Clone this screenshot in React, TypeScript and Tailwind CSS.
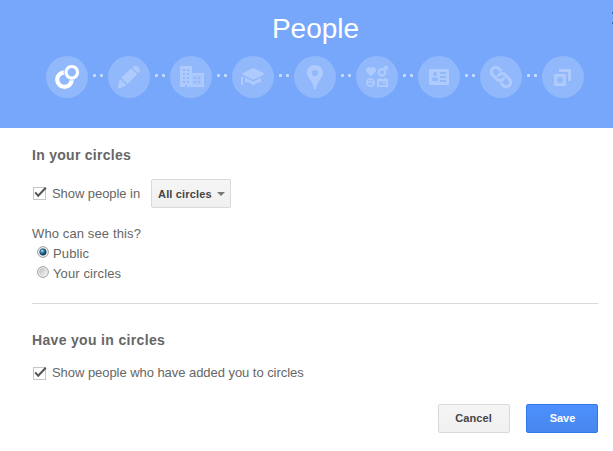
import React, { Fragment, ReactNode } from "react";

const icons: ReactNode[] = [
  <g fill="none" stroke="#fff">
    <circle cx="18.5" cy="23.6" r="7.3" strokeWidth="4.2" />
    <circle cx="25.8" cy="16.3" r="8.2" fill="#92b8fc" stroke="none" />
    <circle cx="25.8" cy="16.3" r="5.8" strokeWidth="3.2" />
  </g>,
  <g fill="#afcbfd">
    <path d="M12.8 22.3 23.3 12.2 29.2 18.2 19 28.5 18.6 26 15.5 25.3 15 22.5Z" />
    <path d="M24.3 11.3 25.5 10.2Q28 9 30 11.2 32.6 13.5 31.2 16.2L30.1 17.3Z" />
    <path d="M11.6 23.8 13.8 24 14.5 26.5 17.2 27.2 18 29.4 13.5 31.8 9.8 32.3 10.5 27.8Z" />
  </g>,
  <g fill="#afcbfd">
    <path
      fillRule="evenodd"
      d="M10 10H22V31H17V29H15V31H10ZM13 13V15H15V13ZM17 13V15H19V13ZM13 17V19H15V17ZM17 17V19H19V17ZM13 21V23H15V21ZM17 21V23H19V21ZM13 25V27H15V25ZM17 25V27H19V25Z"
    />
    <path fillRule="evenodd" d="M22 17H34V31H22ZM22 19V29H32V19Z" />
    <path fillRule="evenodd" fillOpacity=".75" d="M22 19H32V29H22ZM24 21V23H26V21ZM28 21V23H30V21ZM24 25V27H26V25ZM28 25V27H30V25Z" />
  </g>,
  <g fill="#afcbfd">
    <path d="M9.5 18 20 12.4Q21.3 11.7 22.6 12.4L33 17.7 22.7 23.2Q21.5 23.9 20.2 23.2Z" />
    <path d="M13 21.6 19.5 25Q21.3 25.8 23 25L29 21.8V26L26 26.2 21.5 29.2 17 26.2 13 26Z" />
    <path d="M9 20.5 11 21.3V29H9Z" />
  </g>,
  <path
    fill="#afcbfd"
    fillRule="evenodd"
    d="M21 9C16.3 9 13 12.6 13 16.8 13 22.5 20 26 20 33H22C22 26 29 22.5 29 16.8 29 12.6 25.7 9 21 9ZM21 14A3 3 0 1 1 21 20 3 3 0 1 1 21 14Z"
  />,
  <g fill="#afcbfd">
    <path d="M15 20.5 10.9 16.3C8.3 13.3 12.4 8.8 15 12.2 17.6 8.8 21.7 13.3 19.1 16.3Z" />
    <circle cx="26" cy="16.3" r="3.2" fill="none" stroke="#afcbfd" strokeWidth="2.3" />
    <path d="M28 10H32V14H30.5V12.7L28.8 14.4 27.7 13.3 29.2 11.7H28Z" />
    <path
      fillRule="evenodd"
      d="M14.5 22A4.5 4.5 0 1 1 14.5 31 4.5 4.5 0 1 1 14.5 22ZM12.3 24V25.7H13.8V24ZM15.3 24V25.7H16.8V24ZM11.8 27Q14.5 31.5 17.2 27Z"
    />
    <path fillRule="evenodd" d="M21 23H23V22H25V23H28V22H30V23H32V31H21ZM23 25.5V29H30V25.5ZM27 26H29V28H27Z" />
  </g>,
  <g>
    <rect x="11" y="13" width="20" height="16" rx="1" fill="#afcbfd" />
    <g fill="#92b8fc">
      <circle cx="17" cy="18" r="2" />
      <path d="M14 25V23.5Q14 21 16 21L17 22 18 21Q20 21 20 23.5V25ZM22 16H28V18H22ZM22 20H28V22H22ZM22 24H28V26H22Z" />
    </g>
  </g>,
  <g fill="none" stroke="#afcbfd" strokeWidth="3.1" transform="rotate(45 21 21)">
    <path d="M17.3 16.6H13.6A4.4 4.4 0 0 0 13.6 25.4H19.8A4.4 4.4 0 0 0 23.6 19" />
    <path d="M24.7 25.4H28.4A4.4 4.4 0 0 0 28.4 16.6H22.2A4.4 4.4 0 0 0 18.4 23" />
  </g>,
  <g fill="#afcbfd">
    <path fillRule="evenodd" d="M12 18H24V30H12ZM18 21A3 3 0 1 0 18 27 3 3 0 1 0 18 21Z" />
    <path d="M17 13H29V25H26V16H17Z" />
  </g>,
];

function Steps() {
  return (
    <div className="mt-[9px] ml-[46px] flex items-center">
      {icons.map((icon, i) => (
        <Fragment key={i}>
          {i > 0 && (
            <span className="flex h-[42px] w-5 gap-1 pt-[18px] pl-[5px]">
              <i className="size-[3px] rounded-[1px] bg-[#c9dcfe]" />
              <i className="size-[3px] rounded-[1px] bg-[#c9dcfe]" />
            </span>
          )}
          <span className="size-[42px] shrink-0 rounded-full bg-[#92b8fc]">
            <svg width="42" height="42" viewBox="0 0 42 42">{icon}</svg>
          </span>
        </Fragment>
      ))}
    </div>
  );
}

function Checkbox() {
  return (
    <svg className="mr-[5px] shrink-0" width="15" height="15" viewBox="0 0 15 15">
      <rect x="1.5" y="1.5" width="12" height="12" fill="#fff" stroke="#c6c6c6" />
      <path d="M3.2 6.4 6.2 9.8 13.8 1.7" fill="none" stroke="#555" strokeWidth="2" />
    </svg>
  );
}

function Radio({ checked = false }: { checked?: boolean }) {
  return (
    <svg className="mr-[4px] mb-[2px] ml-[5px] shrink-0" width="12" height="12" viewBox="0 0 13 13">
      <defs>
        <radialGradient id="dot" cx=".35" cy=".3" r=".75">
          <stop offset="0" stopColor="#b9e8fb" />
          <stop offset=".4" stopColor="#2f84b5" />
          <stop offset="1" stopColor="#08283f" />
        </radialGradient>
        <linearGradient id="well" x2="1" y2="1">
          <stop offset="0" stopColor="#b8bcc2" />
          <stop offset="1" stopColor="#f6f6f6" />
        </linearGradient>
      </defs>
      <circle cx="6.5" cy="6.5" r="5.8" fill="#f8f8f8" stroke="#8d8f91" />
      <circle cx="6.5" cy="6.5" r="4.2" fill="url(#well)" />
      {checked && <circle cx="6.5" cy="6.5" r="3.5" fill="url(#dot)" stroke="#173a52" strokeWidth=".6" />}
    </svg>
  );
}

export default function App() {
  return (
    <div className="h-[451px] w-[613px] overflow-hidden bg-white font-['Liberation_Sans',Arial,sans-serif] text-[13px] text-[#666]">
      <header className="relative h-32 bg-[#77a7fb] pt-[11px]">
        <h1 className="h-9 pl-[18px] text-center text-[28px] leading-9 text-white">People</h1>
        <Steps />
        <i className="absolute top-3 right-0 h-0.5 w-px bg-[#47679f]" />
        <i className="absolute top-[22px] right-0 h-0.5 w-px bg-[#47679f]" />
      </header>
      <main className="pr-[15px] pl-8">
        <h2 className="pt-[19px] text-[14px] leading-4 font-bold tracking-[0.28px]"><span>In your circles</span></h2>
        <div className="mt-4 flex h-[29px] items-center">
          <Checkbox />
          <span className="tracking-[-0.06px]">Show people in</span>
          <button className="ml-[11px] flex h-[29px] w-20 items-center rounded-[2px] border border-[#d9d9d9] bg-linear-to-b from-[#f5f5f5] to-[#f0f0f0] pl-1.5 text-[11px] font-bold tracking-[0.15px] whitespace-nowrap text-[#444]">
            <span className="mt-px">All circles</span>
            <i className="ml-[5px] border-x-4 border-t-4 border-x-transparent border-t-[#777]" />
          </button>
        </div>
        <p className="mt-4 h-[19px] leading-[19px] tracking-[0.12px]"><span>Who can see this?</span></p>
        <div className="flex h-5 items-center"><Radio checked /><span className="mt-px tracking-[0.12px]">Public</span></div>
        <div className="flex h-5 items-center"><Radio /><span className="mt-px tracking-[0.12px]">Your circles</span></div>
        <hr className="mt-5 border-[#d9d9d9]" />
        <h2 className="mt-7 text-[14px] leading-4 font-bold tracking-[0.33px]"><span>Have you in circles</span></h2>
        <div className="mt-4 flex h-[18px] items-center">
          <Checkbox />
          <span className="tracking-[-0.05px]">Show people who have added you to circles</span>
        </div>
        <div className="mt-[22px] flex justify-end gap-4 text-[11px] font-bold">
          <button className="h-[29px] w-[72px] rounded-[2px] border border-[#d9d9d9] bg-linear-to-b from-[#f5f5f5] to-[#f0f0f0] pr-px tracking-[0.1px] text-[#444]">Cancel</button>
          <button className="h-[29px] w-[72px] rounded-[2px] border border-[#3079ed] bg-linear-to-b from-[#4d90fe] to-[#4787ed] pl-px text-white">Save</button>
        </div>
      </main>
    </div>
  );
}
